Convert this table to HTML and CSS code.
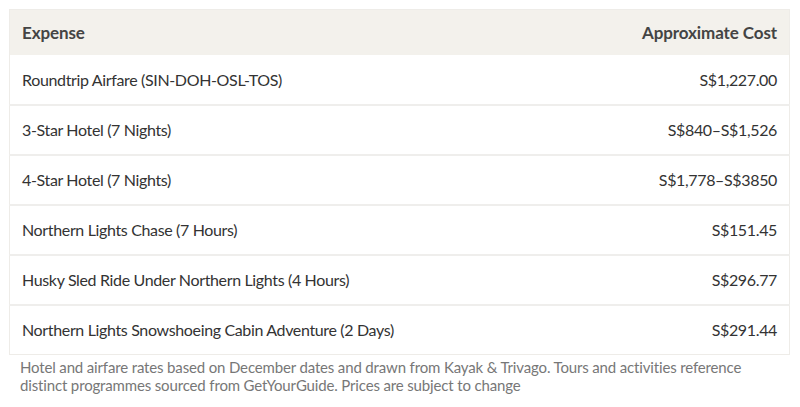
FILE: index.html
```html
<!DOCTYPE html>
<html>
<head>
<meta charset="utf-8">
<link rel="stylesheet" href="styles.css">
</head>
<body>
<div class="wrap">
<table class="costs">
<thead>
<tr><th class="l">Expense</th><th class="r">Approximate Cost</th></tr>
</thead>
<tbody>
<tr><td class="l">Roundtrip Airfare (SIN-DOH-OSL-TOS)</td><td class="r">S$1,227.00</td></tr>
<tr><td class="l">3-Star Hotel (7 Nights)</td><td class="r">S$840–S$1,526</td></tr>
<tr><td class="l">4-Star Hotel (7 Nights)</td><td class="r">S$1,778–S$3850</td></tr>
<tr><td class="l">Northern Lights Chase (7 Hours)</td><td class="r">S$151.45</td></tr>
<tr><td class="l">Husky Sled Ride Under Northern Lights (4 Hours)</td><td class="r">S$296.77</td></tr>
<tr><td class="l">Northern Lights Snowshoeing Cabin Adventure (2 Days)</td><td class="r">S$291.44</td></tr>
</tbody>
</table>
<p class="note">Hotel and airfare rates based on December dates and drawn from Kayak &amp; Trivago. Tours and activities reference distinct programmes sourced from GetYourGuide. Prices are subject to change</p>
</div>
</body>
</html>
```
FILE: styles.css
```css
html, body { margin: 0; padding: 0; background: #fff; }
body { font-family: "Lato", "Noto Sans", sans-serif; }
.wrap { padding: 9px 10px 0 9px; }
.costs {
  width: 100%;
  border-collapse: collapse;
  border: 1px solid #eeece8;
  font-size: 16px;
  letter-spacing: -0.35px;
  color: #333;
}
.costs th {
  background: #f3f1ec;
  color: #444;
  font-weight: 700;
  font-size: 17px;
  letter-spacing: -0.1px;
  height: 45px;
  padding: 0 12px;
  box-sizing: border-box;
}
.costs td {
  height: 50px;
  padding: 0 12px;
  border-top: 2px solid #efeeec;
  box-sizing: border-box;
}
.costs tbody tr:first-child td { border-top: none; }
.l { text-align: left; }
.r { text-align: right; }
.note {
  margin: 3px 0 0 11px;
  max-width: 740px;
  font-size: 15px;
  letter-spacing: -0.15px;
  line-height: 18px;
  color: #777;
}
```
